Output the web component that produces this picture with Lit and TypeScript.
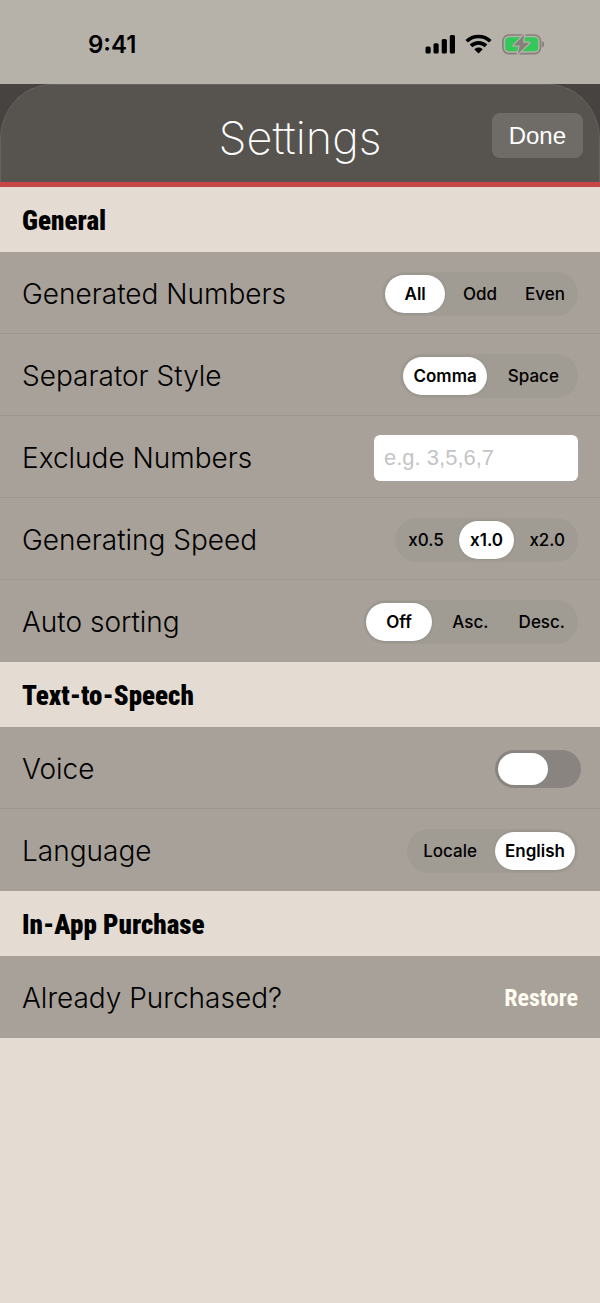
import { LitElement, html, css } from "lit";
import { customElement, property, state } from "lit/decorators.js";

@customElement("status-bar")
class StatusBar extends LitElement {
  static styles = css`
    :host {
      display: flex;
      align-items: center;
      justify-content: space-between;
      box-sizing: border-box;
      height: 84px;
      padding: 5px 55px 0 88px;
      background: #b6b1a9;
    }
    .time {
      font-size: 24px;
      line-height: 32px;
      font-weight: 600;
    }
    .icons {
      display: flex;
      align-items: center;
      gap: 10px;
    }
    svg {
      display: block;
    }
  `;

  render() {
    return html`
      <span class="time">9:41</span>
      <div class="icons">
        <svg width="31" height="21" viewBox="0 0 31 21" role="img" aria-label="Signal">
          <rect x="1.500" y="12.500" width="5.200" height="7" rx="1.500" />
          <rect x="9.500" y="9.300" width="5.200" height="10.200" rx="1.500" />
          <rect x="17.700" y="5" width="5.200" height="14.500" rx="1.500" />
          <rect x="25.800" y="1" width="5.200" height="18.500" rx="1.500" />
        </svg>
        <svg width="27" height="21" viewBox="0 0 27 21" role="img" aria-label="Wi-Fi">
          <g fill="none" stroke="#000" stroke-width="3.700">
            <path d="M1.700 7.300C8.200 0.900 18.800 0.900 25.300 7.300" />
            <path d="M6 11.900C10.200 7.800 16.800 7.800 21 11.900" />
          </g>
          <path d="M9.700 14.900C11.900 13.100 15.100 13.100 17.300 14.900Q17.700 15.300 17.300 15.700L14 19Q13.500 19.400 13 19L9.700 15.700Q9.300 15.300 9.700 14.900Z" />
        </svg>
        <svg width="43" height="21" viewBox="0 0 43 21" role="img" aria-label="Battery charging">
          <rect x="0.900" y="1" width="37.600" height="18.600" rx="6" fill="none" stroke="#85807a" stroke-width="1.700" />
          <path d="M40.300 7.200C42.600 8.200 42.600 12.400 40.300 13.400Z" fill="#7c7771" />
          <rect x="3.200" y="3.300" width="33" height="14" rx="3.800" fill="#34c759" />
          <path
            d="M22.400 0.600L11.600 11.600H17.800L15.800 20L27.400 8.800H20.800Z"
            fill="#85807a"
            stroke="#b6b1a9"
            stroke-width="2.400"
            stroke-linejoin="round"
            paint-order="stroke"
          />
        </svg>
      </div>
    `;
  }
}

@customElement("segmented-control")
class SegmentedControl extends LitElement {
  @property() label = "";
  @property({ attribute: false }) options: string[] = [];
  @property() value = "";

  static styles = css`
    :host {
      display: block;
    }
    .track {
      display: inline-grid;
      grid-auto-flow: column;
      grid-auto-columns: 1fr;
      gap: 5px;
      margin: 0;
      padding: 3px;
      border: 0;
      border-radius: 22px;
      background: #a09b93;
      vertical-align: top;
    }
    .segment {
      position: relative;
      padding: 0 10px;
      border-radius: 19px;
      font-size: 17px;
      line-height: 38px;
      font-weight: 500;
      text-align: center;
      white-space: nowrap;
      cursor: pointer;
    }
    .segment:has(:checked) {
      background: #fff;
      font-weight: 600;
      box-shadow: 0 0 3px rgba(0, 0, 0, 0.12);
    }
    .segment:has(:focus-visible) {
      outline: 2px solid #c74747;
    }
    .radio {
      position: absolute;
      inset: 0;
      margin: 0;
      opacity: 0;
      cursor: pointer;
    }
  `;

  render() {
    return html`
      <div class="track" role="radiogroup" aria-label=${this.label}>
        ${this.options.map(
          (option) => html`
            <label class="segment">
              <input
                class="radio"
                type="radio"
                name="segment"
                .value=${option}
                .checked=${option === this.value}
                @change=${() => (this.value = option)}
              />${option}
            </label>
          `
        )}
      </div>
    `;
  }
}

@customElement("settings-row")
class SettingsRow extends LitElement {
  static styles = css`
    :host {
      display: flex;
      align-items: center;
      justify-content: space-between;
      box-sizing: border-box;
      min-height: 82px;
      padding: 2px 22px 0;
      border-bottom: 1px solid #9e968d;
      background: #a8a199;
    }
    :host(:last-of-type) {
      border-bottom-color: #a8a199;
    }
  `;

  render() {
    return html`<slot></slot>`;
  }
}

@customElement("app-root")
class AppRoot extends LitElement {
  @state() private voice = false;

  static styles = css`
    :host {
      display: block;
      min-height: 100vh;
      background: #e4dcd2;
      color: #000;
      font-family: Inter, sans-serif;
    }
    .header {
      background: #474340;
      border-bottom: 5px solid #c74747;
    }
    .card {
      display: grid;
      grid-template-columns: 1fr auto 1fr;
      align-items: center;
      box-sizing: border-box;
      height: 98px;
      padding: 4px 16px 0;
      border: 1px solid #65625d;
      border-bottom: 0;
      border-radius: 52px 52px 0 0 / 56px 56px 0 0;
      background: #575450;
      color: #fff;
    }
    .title {
      grid-column: 2;
      margin: 0;
      padding-top: 4px;
      font-size: 45px;
      line-height: 56px;
      font-weight: 200;
    }
    .done {
      justify-self: end;
      height: 45px;
      padding: 0 17px;
      border: 0;
      border-radius: 8px;
      background: #6f6c68;
      color: #fff;
      font: 24px/45px "Liberation Sans", sans-serif;
    }
    .section {
      box-sizing: border-box;
      height: 65px;
      margin: 0;
      padding: 2px 22px 0;
      font-family: "Roboto Condensed", "Liberation Sans Narrow", sans-serif;
      font-size: 27px;
      line-height: 64px;
      font-weight: 900;
    }
    .name {
      font-size: 28px;
      line-height: 36px;
      font-weight: 300;
    }
    .exclude {
      box-sizing: border-box;
      width: 34vw;
      height: 46px;
      padding: 0 10px;
      border: 0;
      border-radius: 6px;
      background: #fff;
      font: 22px "Liberation Sans", sans-serif;
    }
    .exclude::placeholder {
      color: #c4c4c6;
      opacity: 1;
    }
    .switch {
      appearance: none;
      display: flex;
      box-sizing: border-box;
      width: 86px;
      height: 38px;
      margin: 0 -3px 0 0;
      padding: 3px;
      border-radius: 19px;
      background: #898480;
    }
    .switch::before {
      content: "";
      width: 50px;
      border-radius: 16px;
      background: #fff;
    }
    .switch:checked {
      justify-content: flex-end;
      background: #34c759;
    }
    .restore {
      padding: 0;
      border: 0;
      background: none;
      color: #fffdf0;
      font: 700 24px/36px "Roboto Condensed", "Liberation Sans Narrow", sans-serif;
    }
  `;

  private choice(label: string, options: string[], value: string) {
    return html`
      <settings-row>
        <span class="name">${label}</span>
        <segmented-control .label=${label} .options=${options} .value=${value}></segmented-control>
      </settings-row>
    `;
  }

  render() {
    return html`
      <status-bar></status-bar>
      <header class="header">
        <div class="card">
          <h1 class="title">Settings</h1>
          <button class="done" type="button">Done</button>
        </div>
      </header>
      <main>
        <section>
          <h2 class="section">General</h2>
          ${this.choice("Generated Numbers", ["All", "Odd", "Even"], "All")}
          ${this.choice("Separator Style", ["Comma", "Space"], "Comma")}
          <settings-row>
            <label class="name" for="exclude">Exclude Numbers</label>
            <input class="exclude" id="exclude" type="text" placeholder="e.g. 3,5,6,7" />
          </settings-row>
          ${this.choice("Generating Speed", ["x0.5", "x1.0", "x2.0"], "x1.0")}
          ${this.choice("Auto sorting", ["Off", "Asc.", "Desc."], "Off")}
        </section>
        <section>
          <h2 class="section">Text-to-Speech</h2>
          <settings-row>
            <label class="name" for="voice">Voice</label>
            <input
              class="switch"
              id="voice"
              type="checkbox"
              role="switch"
              .checked=${this.voice}
              @change=${() => (this.voice = !this.voice)}
            />
          </settings-row>
          ${this.choice("Language", ["Locale", "English"], "English")}
        </section>
        <section>
          <h2 class="section">In-App Purchase</h2>
          <settings-row>
            <span class="name">Already Purchased?</span>
            <button class="restore" type="button">Restore</button>
          </settings-row>
        </section>
      </main>
    `;
  }
}
